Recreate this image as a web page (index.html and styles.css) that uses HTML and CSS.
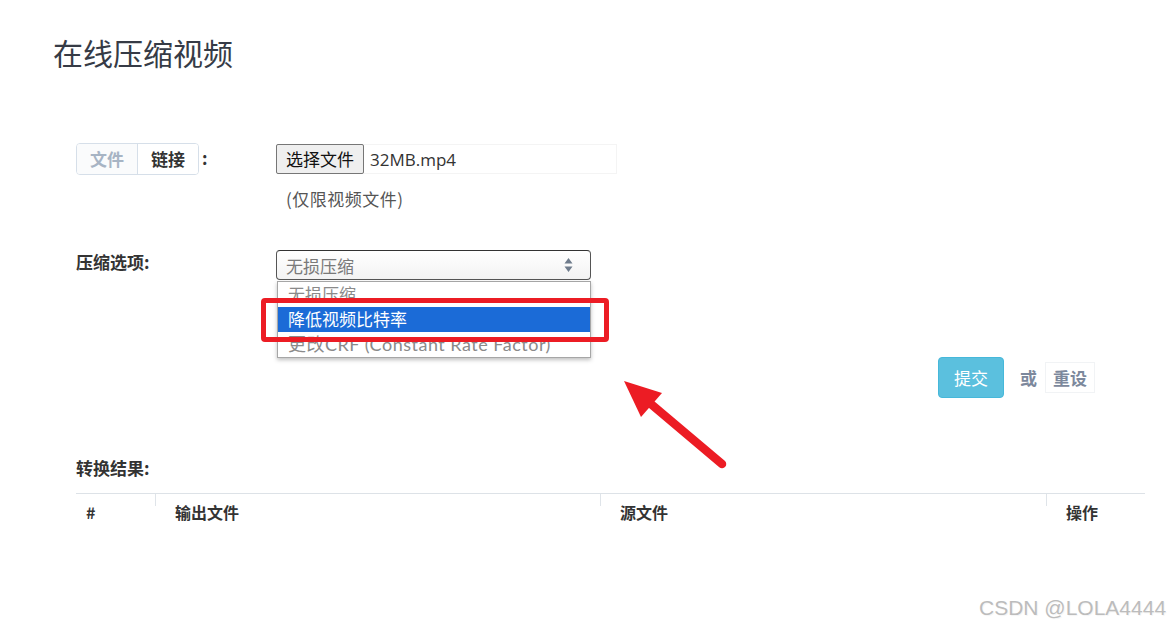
FILE: index.html
```html
<!DOCTYPE html>
<html lang="zh-CN">
<head>
<meta charset="utf-8">
<title>在线压缩视频</title>
<link rel="stylesheet" href="styles.css">
</head>
<body>
<div class="page">
  <h1 class="title">在线压缩视频</h1>
  <form class="form">
    <div class="row row-file">
      <div class="label-cell">
        <div class="tabs"><span class="tab tab-off">文件</span><span class="tab tab-on">链接</span></div>
        <span class="colon">:</span>
      </div>
      <div class="control-cell">
        <div class="file-input"><span class="file-btn">选择文件</span><span class="file-name">32MB.mp4</span></div>
        <div class="hint">(仅限视频文件)</div>
      </div>
    </div>
    <div class="row row-select">
      <div class="label-cell"><span class="label">压缩选项:</span></div>
      <div class="control-cell">
        <div class="select-wrap">
          <div class="select">
            <span class="select-value">无损压缩</span>
            <svg class="select-arrows" width="9" height="16" viewBox="0 0 9 16"><path d="M4.5 1 L8.5 6.5 L0.5 6.5 Z M4.5 15 L8.5 9.5 L0.5 9.5 Z" fill="#6f7c8c"/></svg>
          </div>
          <ul class="dropdown">
            <li class="option">无损压缩</li>
            <li class="option option-active">降低视频比特率</li>
            <li class="option option-wide">更改CRF (Constant Rate Factor)</li>
          </ul>
          <div class="mark-box"></div>
        </div>
      </div>
    </div>
    <div class="actions">
      <span class="btn-submit">提交</span>
      <span class="or">或</span>
      <span class="reset">重设</span>
    </div>
    <div class="label result-label">转换结果:</div>
    <table class="results">
      <thead>
        <tr>
          <th class="c-num">#</th>
          <th class="c-out">输出文件</th>
          <th class="c-src">源文件</th>
          <th class="c-op">操作</th>
        </tr>
      </thead>
    </table>
  </form>
  <svg class="arrow" width="1173" height="629" viewBox="0 0 1173 629">
    <line x1="722" y1="464" x2="645" y2="399" stroke="#ec1c24" stroke-width="8.5" stroke-linecap="round"/>
    <polygon points="624,381 662,393 641,417" fill="#ec1c24"/>
  </svg>
  <div class="watermark">CSDN @LOLA4444</div>
</div>
</body>
</html>
```
FILE: styles.css
```css
html, body {
  margin: 0;
  padding: 0;
  background: #fff;
}

body {
  font-family: "Noto Sans CJK SC", "Noto Sans", sans-serif;
  color: #333;
}

.page {
  position: relative;
  width: 1173px;
  height: 629px;
  overflow: hidden;
  box-sizing: border-box;
  padding: 30px 0 0 53px;
}

.title {
  margin: 0;
  font-size: 30px;
  font-weight: 400;
  line-height: 45px;
  color: #363b46;
}

.form {
  margin: 68px 0 0 23px;
  width: 1069px;
  font-size: 17px;
}

.row {
  display: grid;
  grid-template-columns: 200px 341px;
}

.label-cell {
  display: flex;
  align-items: flex-start;
}

.tabs {
  display: flex;
  border: 1px solid #d6dfe9;
  border-radius: 4px;
  overflow: hidden;
}

.tab {
  width: 60px;
  text-align: center;
  line-height: 30px;
  font-weight: 700;
  font-size: 17px;
}

.tab-off {
  color: #a7b4c4;
  background: #fafbfc;
}

.tab-on {
  color: #333;
  background: #fff;
  border-left: 1px solid #d6dfe9;
}

.colon {
  margin-left: 3px;
  line-height: 30px;
  font-weight: 700;
}

.file-input {
  margin-top: 1px;
  display: flex;
  align-items: center;
  height: 30px;
  box-sizing: border-box;
  border: 1px solid #f4f4f4;
  border-left: none;
}

.file-btn {
  box-sizing: border-box;
  height: 30px;
  line-height: 28px;
  padding: 0 9px;
  background: #efefef;
  border: 1px solid #767676;
  border-radius: 2px;
  color: #111;
  font-size: 17px;
}

.file-name {
  margin-left: 6px;
  font-family: "Open Sans", "Noto Sans", sans-serif;
  font-size: 17px;
  color: #333;
}

.hint {
  margin-top: 13px;
  padding-left: 10px;
  line-height: 24px;
  color: #555;
  font-size: 17px;
  letter-spacing: 0.5px;
}

.row-select {
  margin-top: 39px;
}

.label {
  font-weight: 700;
  line-height: 24px;
  color: #333;
}

.select-wrap {
  position: relative;
  width: 315px;
}

.select {
  box-sizing: border-box;
  width: 315px;
  height: 30px;
  display: flex;
  align-items: center;
  justify-content: space-between;
  padding: 0 17px 0 9px;
  border: 1px solid #555;
  border-top-color: #333;
  border-radius: 4px;
  background: linear-gradient(#ffffff, #f3f3f3);
}

.select-value {
  color: #7a7a7a;
  font-size: 17px;
}

.select-arrows {
  display: block;
}

.dropdown {
  position: absolute;
  top: 31px;
  left: 1px;
  width: 314px;
  box-sizing: border-box;
  margin: 0;
  padding: 0;
  list-style: none;
  background: #fff;
  border: 1px solid #a6a6a6;
  box-shadow: 0 2px 4px rgba(0, 0, 0, 0.25);
  font-family: Lato, "Noto Sans CJK SC", sans-serif;
  font-size: 17px;
}

.option {
  height: 25px;
  line-height: 25px;
  padding-left: 10px;
  color: #8a8a8a;
  white-space: nowrap;
}

.option-wide {
  font-size: 18px;
  letter-spacing: 0.5px;
}

.option-active {
  background: #1b6bd7;
  color: #fff;
}

.mark-box {
  position: absolute;
  left: -15px;
  top: 48px;
  width: 348px;
  height: 44px;
  box-sizing: border-box;
  border: 5px solid #ec1c24;
  border-radius: 4px;
}

.actions {
  margin-top: 77px;
  display: flex;
  justify-content: flex-end;
  align-items: center;
  padding-right: 50px;
}

.btn-submit {
  box-sizing: border-box;
  width: 66px;
  height: 41px;
  line-height: 39px;
  text-align: center;
  background: #5bc0de;
  border: 1px solid #46b8da;
  border-radius: 4px;
  color: #fff;
  font-size: 17px;
}

.or {
  margin-left: 16px;
  font-weight: 700;
  color: #7c889c;
}

.reset {
  margin-left: 8px;
  height: 31px;
  line-height: 29px;
  box-sizing: border-box;
  padding: 0 7px;
  border: 1px solid #f1f3f5;
  font-weight: 700;
  color: #7c889c;
}

.result-label {
  margin-top: 58px;
}

.results {
  margin-top: 13px;
  width: 1069px;
  border-collapse: collapse;
  table-layout: fixed;
}

.results th {
  position: relative;
  text-align: left;
  font-size: 16px;
  font-weight: 700;
  line-height: 24px;
  padding: 6px 20px;
  border-top: 1px solid #dde2e7;
  color: #333;
}

.results th + th::before {
  content: "";
  position: absolute;
  left: 0;
  top: 0;
  width: 1px;
  height: 12px;
  background: #dfe4e9;
}

.results th.c-num { width: 49px; padding-left: 10px; }
.results th.c-out { width: 405px; }
.results th.c-src { width: 406px; }
.results th.c-op { width: 59px; }

.arrow {
  position: absolute;
  left: 0;
  top: 0;
  pointer-events: none;
}

.watermark {
  position: absolute;
  left: 979px;
  top: 596px;
  font-family: "Liberation Sans", Arial, sans-serif;
  font-size: 21px;
  line-height: 24px;
  color: #bcbcbc;
  text-shadow: 1px 1px 1px #f4f4f4;
  white-space: nowrap;
}
```
